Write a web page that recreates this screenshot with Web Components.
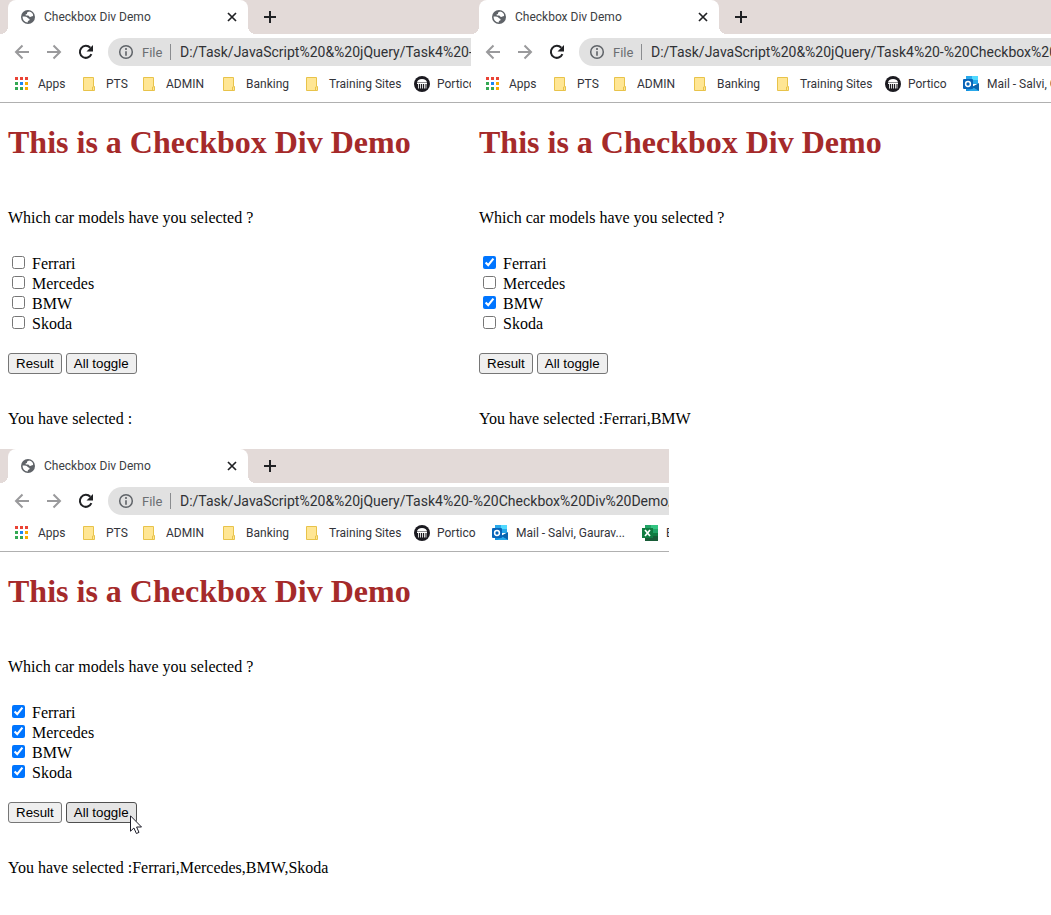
<!DOCTYPE html>
<html lang="en">
<head>
<meta charset="utf-8">
<title>Checkbox Div Demo</title>
<style>
body { margin: 0; background: #fff; color: #000; }
</style>
</head>
<body>
<demo-gallery>
  <browser-window slot="first" count="6"><car-form></car-form></browser-window>
  <browser-window slot="second" count="7"><car-form selected="Ferrari,BMW"></car-form></browser-window>
  <browser-window slot="third" count="8"><car-form selected="Ferrari,Mercedes,BMW,Skoda" hovered></car-form></browser-window>
</demo-gallery>

<script>
const ICONS = {
  apps: `<svg width="16" height="14" viewBox="0 0 16 14"><path fill="#ea4335" d="M1 0h3v3H1zM6 0h3v3H6zM11 0h3v3h-3z"/><path fill="#34a853" d="M1 5h3v3H1zM1 10h3v3H1zM6 10h3v3H6z"/><path fill="#1a86f4" d="M6 5h3v3H6z"/><path fill="#f9ab00" d="M11 5h3v3h-3zM11 10h3v3h-3z"/></svg>`,
  folder: `<svg width="14" height="16" viewBox="0 0 14 16"><path fill="#ffe694" stroke="#e8c34a" d="M1.5 1.5h10v9h1v4h-11z"/><path fill="none" stroke="#e8c34a" d="M10.500 14.500v-3.500h1"/></svg>`,
  portico: `<svg width="17" height="16" viewBox="-1 0 17 16"><circle cx="8" cy="8" r="8" fill="#1b1a20"/><path fill="#fff" d="M3 6.5a5 3.6 0 0 1 10 0zM3 7h10v1H3z"/><path stroke="#d8d8d8" d="M4.5 8v4.5M6.5 8v4.5M8.5 8v4.5M10.5 8v4.5M12 8v4.5"/></svg>`,
  outlook: `<svg width="16" height="16" viewBox="0 0 16 16"><path fill="#28a8ea" d="M3 0h12v8H3z"/><path fill="#50d9ff" d="M9 0h6v4H9z"/><path fill="#0358a7" d="M3 4h6v5H3z"/><path fill="#1490df" d="M3 15V8l6 3 7-3v7z"/><path fill="#0a64ad" d="M9 11l7-4v8z"/><path fill="#28a8ea" d="M16 15H5l6-3z"/><rect y="3" width="10" height="10" rx="1" fill="#0864b8"/><circle cx="5" cy="8" r="2.4" fill="none" stroke="#fff" stroke-width="1.5"/></svg>`,
  excel: `<svg width="16" height="16" viewBox="0 0 16 16"><path fill="#21a366" d="M3 0h13v16H3z"/><path fill="#33c481" d="M9 0h7v4H9z"/><path fill="#107c41" d="M3 8h13v4H3z"/><path fill="#185c37" d="M3 11h13v5H3z"/><rect y="3" width="11" height="10" fill="#107c41"/><path stroke="#fff" stroke-width="1.7" d="M3 5l5 6M8 5l-5 6"/></svg>`
};
const BOOKMARKS = [["Apps","apps"],["PTS","folder"],["ADMIN","folder"],["Banking","folder"],["Training Sites","folder"],["Portico","portico"],["Mail - Salvi, Gaurav...","outlook"],["E","excel"]];

class DemoGallery extends HTMLElement {
  constructor() {
    super();
    this.attachShadow({ mode: "open" }).innerHTML = `
<style>
:host { display: block; }
.row { display: grid; }
.top { grid-template-columns: 471fr 580fr; }
.bottom { grid-template-columns: 669fr 382fr; }
</style>
<div class="row top"><slot name="first"></slot><slot name="second"></slot></div>
<div class="row bottom"><slot name="third"></slot></div>`;
  }
}

class BookmarkItem extends HTMLElement {
  constructor() {
    super();
    this.attachShadow({ mode: "open" }).innerHTML = `
<style>
:host { display: block; }
a { display: flex; align-items: center; color: #33343a; text-decoration: none; font: 12px/20px Roboto, sans-serif; white-space: nowrap; }
.icon { width: 24px; display: flex; flex: none; }
</style>
<a href="#"><span class="icon">${ICONS[this.getAttribute("icon")] || ""}</span><slot></slot></a>`;
  }
}

class BrowserWindow extends HTMLElement {
  constructor() {
    super();
    const items = BOOKMARKS.slice(0, Number(this.getAttribute("count")))
      .map(([name, icon]) => `<bookmark-item icon="${icon}">${name}</bookmark-item>`).join("");
    this.attachShadow({ mode: "open" }).innerHTML = `
<style>
:host { display: block; min-width: 0; overflow: hidden; font-family: Roboto, sans-serif; }
svg { display: block; }
button { border: 0; padding: 0; background: none; display: block; }
.strip { display: flex; height: 34px; padding-left: 8px; background: #e3dad8; }
.tab { position: relative; display: flex; align-items: center; flex: none; box-sizing: border-box; width: 240px; padding: 0 11px 0 13px; background: #fff; border-radius: 8px 8px 0 0; }
.tab::before, .tab::after { content: ""; position: absolute; bottom: 0; width: 8px; height: 8px; }
.tab::before { left: -8px; background: radial-gradient(circle at 0 0, #e3dad8 8px, #fff 8px); }
.tab::after { right: -8px; background: radial-gradient(circle at 100% 0, #e3dad8 8px, #fff 8px); }
.title { flex: 1; padding-left: 9px; font-size: 12px; line-height: 20px; color: #3c4043; white-space: nowrap; }
.add { margin-left: 16px; }
.tools { display: flex; align-items: center; height: 36px; padding-left: 14px; }
.nav { display: flex; gap: 16px; flex: none; width: 94px; }
.address { display: flex; align-items: center; flex: 1; min-width: 0; height: 28px; padding-left: 10px; background: #e1e1e1; border-radius: 14px 0 0 14px; color: #6b6e72; }
.file { width: 20px; padding: 0 8px; font-size: 13px; }
.line { width: 1px; height: 16px; margin-right: 9px; background: #8a8c8f; }
input { flex: 1; min-width: 0; border: 0; padding: 0; background: none; color: #303135; font: 14px/20px Roboto, sans-serif; text-overflow: clip; }
nav { display: grid; grid-template-columns: 68px 60px 80px 83px 108px 79px 150px 80px; align-items: center; height: 28px; padding: 0 0 4px 14px; border-bottom: 1px solid #b0b0b0; }
</style>
<div class="strip">
  <div class="tab">
    <svg width="14" height="14" viewBox="0 0 14 14"><circle cx="7" cy="7" r="7" fill="#5f6368"/><path fill="#fff" d="M8 1.6C7 2.4 5.700 2.300 6 3.500c.2.8-.7.9-1.500.900.2 1.400.9 1.200 2.500 1.200 1.200 0 .9 1.500 2.200 1.500 1 0 1.300-.9 2.900-1C12.400 3.700 10.500 1.900 8 1.600zM1.600 6.400C1.500 9.600 3.500 12.200 6.800 12.400c-.2-1.200.2-1.800 1.200-2 .9-.2.7-1.500 0-1.700C6.500 8.400 6.600 7 5.200 6.700 4 6.400 3 6.500 1.600 6.400z"/></svg>
    <span class="title">Checkbox Div Demo</span>
    <button aria-label="Close tab"><svg width="10" height="34" viewBox="0 0 10 34"><path stroke="#202124" stroke-width="1.7" d="M1 13l8 8M9 13l-8 8"/></svg></button>
  </div>
  <button class="add" aria-label="New tab"><svg width="12" height="34" viewBox="0 0 12 34"><path stroke="#202124" stroke-width="2" d="M6 11v12M0 17h12"/></svg></button>
</div>
<div class="tools">
  <div class="nav">
    <button aria-label="Back"><svg width="16" height="16" viewBox="0 0 16 16"><path fill="none" stroke="#9a9a9c" stroke-width="2" d="M15 8H3M8.500 1.500L2 8l6.500 6.500"/></svg></button>
    <button aria-label="Forward"><svg width="16" height="16" viewBox="0 0 16 16"><path fill="none" stroke="#9a9a9c" stroke-width="2" d="M1 8h12M7.500 1.500L14 8l-6.500 6.500"/></svg></button>
    <button aria-label="Reload"><svg width="16" height="16" viewBox="0 0 16 16"><path fill="none" stroke="#202124" stroke-width="2" d="M13.400 10.200A6 6 0 1 1 12.300 3.800"/><path fill="#202124" d="M15 1v6.500H8.500z"/></svg></button>
  </div>
  <div class="address">
    <svg width="16" height="16" viewBox="0 0 16 16"><circle cx="8" cy="8" r="6.300" fill="none" stroke="#5f6368" stroke-width="1.500"/><path stroke="#5f6368" stroke-width="1.600" d="M8 4v2M8 7.200v4.500"/></svg>
    <span class="file">File</span><span class="line"></span>
    <input type="text" aria-label="Address" value="D:/Task/JavaScript%20&amp;%20jQuery/Task4%20-%20Checkbox%20Div%20Demo/">
  </div>
</div>
<nav>${items}</nav>
<slot></slot>`;
  }
}

class CarForm extends HTMLElement {
  constructor() {
    super();
    const chosen = (this.getAttribute("selected") || "").split(",").filter(Boolean);
    const rows = ["Ferrari", "Mercedes", "BMW", "Skoda"].map(name =>
      `<label><input type="checkbox"${chosen.includes(name) ? " checked" : ""}>${name}</label>`).join("");
    const pointer = this.hasAttribute("hovered")
      ? `<svg class="pointer" width="13" height="20" viewBox="0 0 13 20"><path fill="#fff" stroke="#1c1c28" d="M.5.8v15.400l3.400-3.200 2.500 5.500 2.600-1.100-2.400-5.400h4.900z"/></svg>` : "";
    this.attachShadow({ mode: "open" }).innerHTML = `
<style>
:host { display: block; padding: 21px 8px 20px; font: 16px/20px "Liberation Serif", serif; }
h1 { margin: 0; font-size: 32px; line-height: 37px; color: brown; white-space: nowrap; }
p { margin: 0; white-space: nowrap; }
.question { margin-top: 47px; }
.cars { margin: 26px 0 19px; }
label { display: flex; align-items: center; height: 20px; }
input { margin: 0 7px 3px 4px; width: 13px; height: 13px; }
.actions { display: flex; gap: 4px; }
button { padding: 2px 7px; border: 1px solid #767676; border-radius: 3px; background: #efefef; color: #000; font-family: "Liberation Sans", sans-serif; }
.toggle { position: relative; }
:host([hovered]) .toggle button { background: #e5e5e5; border-color: #4f4f4f; }
.pointer { position: absolute; left: 64px; top: 13px; }
.answer { margin-top: 35px; }
</style>
<h1>This is a Checkbox Div Demo</h1>
<p class="question">Which car models have you selected ?</p>
<div class="cars">${rows}</div>
<div class="actions"><button>Result</button><div class="toggle"><button>All toggle</button>${pointer}</div></div>
<p class="answer">You have selected :${chosen.join(",")}</p>`;
  }
}

customElements.define("bookmark-item", BookmarkItem);
customElements.define("car-form", CarForm);
customElements.define("browser-window", BrowserWindow);
customElements.define("demo-gallery", DemoGallery);
</script>
</body>
</html>
